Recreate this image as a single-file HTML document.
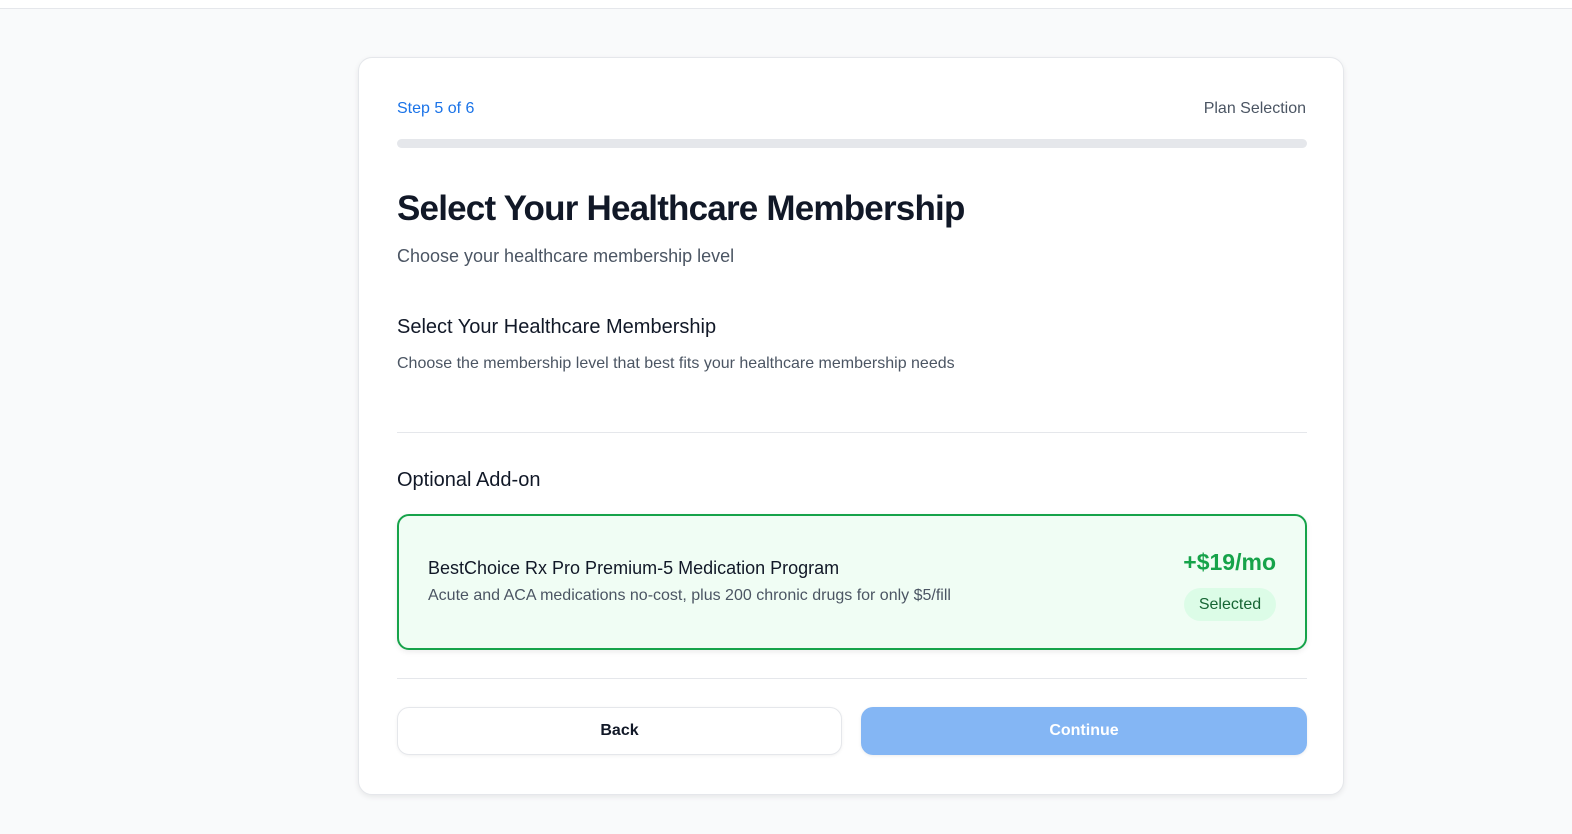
<!DOCTYPE html>
<html><head><style>
*{box-sizing:border-box;margin:0;padding:0}
body{width:1572px;height:834px;background:#f9fafb;font-family:"Liberation Sans",sans-serif;position:relative;overflow:hidden}
.top{position:absolute;left:0;top:0;width:1572px;height:9px;background:#fff;border-bottom:1px solid #e5e7eb}
.card{position:absolute;left:358px;top:57px;width:986px;height:738px;background:#fff;border:1px solid #e5e7eb;border-radius:14px;box-shadow:0 2px 6px rgba(0,0,0,.08)}
.a{position:absolute;white-space:nowrap}
</style></head><body>
<div class="top"></div>
<div class="card">
<div class="a" style="left:38px;top:42px;color:#1a73e8;font-size:16px">Step 5 of 6</div>
<div class="a" style="right:37px;top:42px;color:#4b5563;font-size:16px">Plan Selection</div>
<div class="a" style="left:38px;top:81px;width:910px;height:9px;background:#e5e7eb;border-radius:5px"></div>
<div class="a" style="left:38px;top:131px;color:#111827;font-size:35px;font-weight:bold;letter-spacing:-0.8px">Select Your Healthcare Membership</div>
<div class="a" style="left:38px;top:188px;color:#4b5563;font-size:18px">Choose your healthcare membership level</div>
<div class="a" style="left:38px;top:258px;color:#111827;font-size:20px">Select Your Healthcare Membership</div>
<div class="a" style="left:38px;top:297px;color:#4b5563;font-size:16px">Choose the membership level that best fits your healthcare membership needs</div>
<div class="a" style="left:38px;top:374px;width:910px;height:1px;background:#e5e7eb"></div>
<div class="a" style="left:38px;top:411px;color:#111827;font-size:20px">Optional Add-on</div>
<div class="a" style="left:38px;top:456px;width:910px;height:136px;background:#f0fdf4;border:2px solid #16a34a;border-radius:12px;box-shadow:0 2px 6px rgba(0,0,0,.08)">
 <div class="a" style="left:29px;top:42px;color:#111827;font-size:18px">BestChoice Rx Pro Premium-5 Medication Program</div>
 <div class="a" style="left:29px;top:71px;color:#4b5563;font-size:16px">Acute and ACA medications no-cost, plus 200 chronic drugs for only $5/fill</div>
 <div class="a" style="right:29px;top:33px;color:#16a34a;font-size:23px;font-weight:bold">+$19/mo</div>
 <div class="a" style="right:29px;top:72px;width:92px;height:33px;background:#dcfce7;border-radius:17px;color:#166534;font-size:16px;text-align:center;line-height:33px">Selected</div>
</div>
<div class="a" style="left:38px;top:620px;width:910px;height:1px;background:#e5e7eb"></div>
<div class="a" style="left:38px;top:649px;width:445px;height:48px;border:1px solid #e5e7eb;border-radius:12px;background:#fff;text-align:center;line-height:46px;font-size:16px;font-weight:bold;color:#111827;box-shadow:0 1px 3px rgba(0,0,0,.06)">Back</div>
<div class="a" style="left:502px;top:649px;width:446px;height:48px;border-radius:12px;background:#84b6f4;text-align:center;line-height:48px;font-size:16px;font-weight:bold;color:#fff;box-shadow:0 1px 3px rgba(0,0,0,.08)">Continue</div>
</div>
</body></html>
